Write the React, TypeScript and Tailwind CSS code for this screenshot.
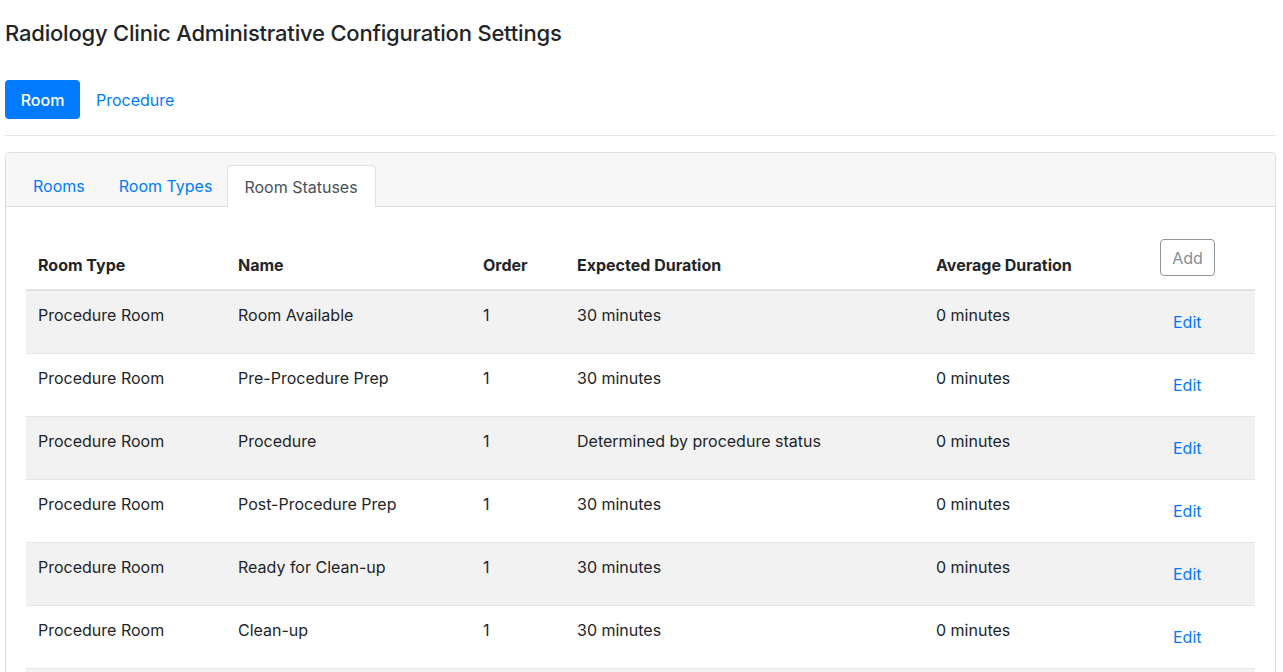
import React from 'react';

const rows = [
  { type: 'Procedure Room', name: 'Room Available', order: 1, expected: '30 minutes', average: '0 minutes' },
  { type: 'Procedure Room', name: 'Pre-Procedure Prep', order: 1, expected: '30 minutes', average: '0 minutes' },
  { type: 'Procedure Room', name: 'Procedure', order: 1, expected: 'Determined by procedure status', average: '0 minutes' },
  { type: 'Procedure Room', name: 'Post-Procedure Prep', order: 1, expected: '30 minutes', average: '0 minutes' },
  { type: 'Procedure Room', name: 'Ready for Clean-up', order: 1, expected: '30 minutes', average: '0 minutes' },
  { type: 'Procedure Room', name: 'Clean-up', order: 1, expected: '30 minutes', average: '0 minutes' },
];

const App: React.FC = () => {
  return (
    <div className="min-h-screen bg-white pl-[5px] pr-[7px] pt-[19px] text-[16px] text-[#212529] font-['Inter',sans-serif]">
      <h4 className="text-[22px] leading-[28px] font-medium tracking-[-0.2px]">
        Radiology Clinic Administrative Configuration Settings
      </h4>

      <div className="mt-[33px] flex">
        <button className="h-[39px] w-[75px] rounded-[4px] bg-[#007bff] text-white font-medium">Room</button>
        <button className="h-[39px] pl-4 pr-4 text-[#007bff]">Procedure</button>
      </div>

      <hr className="mt-4 mb-4 border-t border-[#e5e5e5]" />

      <div className="rounded-[4px] border border-[#dfdfdf]">
        <div className="flex rounded-t-[4px] border-b border-[#dfdfdf] bg-[#f7f7f7] pl-[11px] pt-3">
          <button className="mr-[2px] h-[41px] px-4 text-[#007bff]">Rooms</button>
          <button className="h-[41px] pl-4 pr-[15px] text-[#007bff]">Room Types</button>
          <button className="-mb-px h-[42px] rounded-t-[4px] border border-b-0 border-[#dee2e6] bg-white pl-4 pr-[17px] text-[#495057]">
            Room Statuses
          </button>
        </div>

        <div className="px-5 pt-5">
          <table className="w-full table-fixed border-collapse text-left">
            <colgroup>
              <col className="w-[200px]" />
              <col className="w-[245px]" />
              <col className="w-[94px]" />
              <col className="w-[359px]" />
              <col className="w-[224px]" />
              <col />
            </colgroup>
            <thead>
              <tr className="border-b-2 border-[#dee2e6]">
                <th className="p-3 align-bottom font-bold">Room Type</th>
                <th className="p-3 align-bottom font-bold">Name</th>
                <th className="p-3 align-bottom font-bold">Order</th>
                <th className="p-3 align-bottom font-bold">Expected Duration</th>
                <th className="p-3 align-bottom font-bold">Average Duration</th>
                <th className="px-3 pt-3 pb-[13px] align-bottom font-normal">
                  <button className="h-[37px] w-[55px] rounded-[4px] border border-[#8e959b] text-[#868e96]">Add</button>
                </th>
              </tr>
            </thead>
            <tbody>
              {rows.map((r, i) => (
                <tr key={i} className={`border-t border-[#e6e6e6] ${i % 2 === 0 ? 'bg-[#f2f2f2]' : 'bg-white'}`}>
                  <td className="p-3 align-top leading-6">{r.type}</td>
                  <td className="p-3 align-top leading-6">{r.name}</td>
                  <td className="p-3 align-top leading-6">{r.order}</td>
                  <td className="p-3 align-top leading-6">{r.expected}</td>
                  <td className="p-3 align-top leading-6">{r.average}</td>
                  <td className="p-3 align-top">
                    <button className="ml-px h-[38px] px-3 text-[#007bff]">Edit</button>
                  </td>
                </tr>
              ))}
              <tr className="border-t border-[#e6e6e6] bg-[#f2f2f2]">
                <td colSpan={6} className="h-[62px]" />
              </tr>
            </tbody>
          </table>
        </div>
      </div>
    </div>
  );
};

export default App;
